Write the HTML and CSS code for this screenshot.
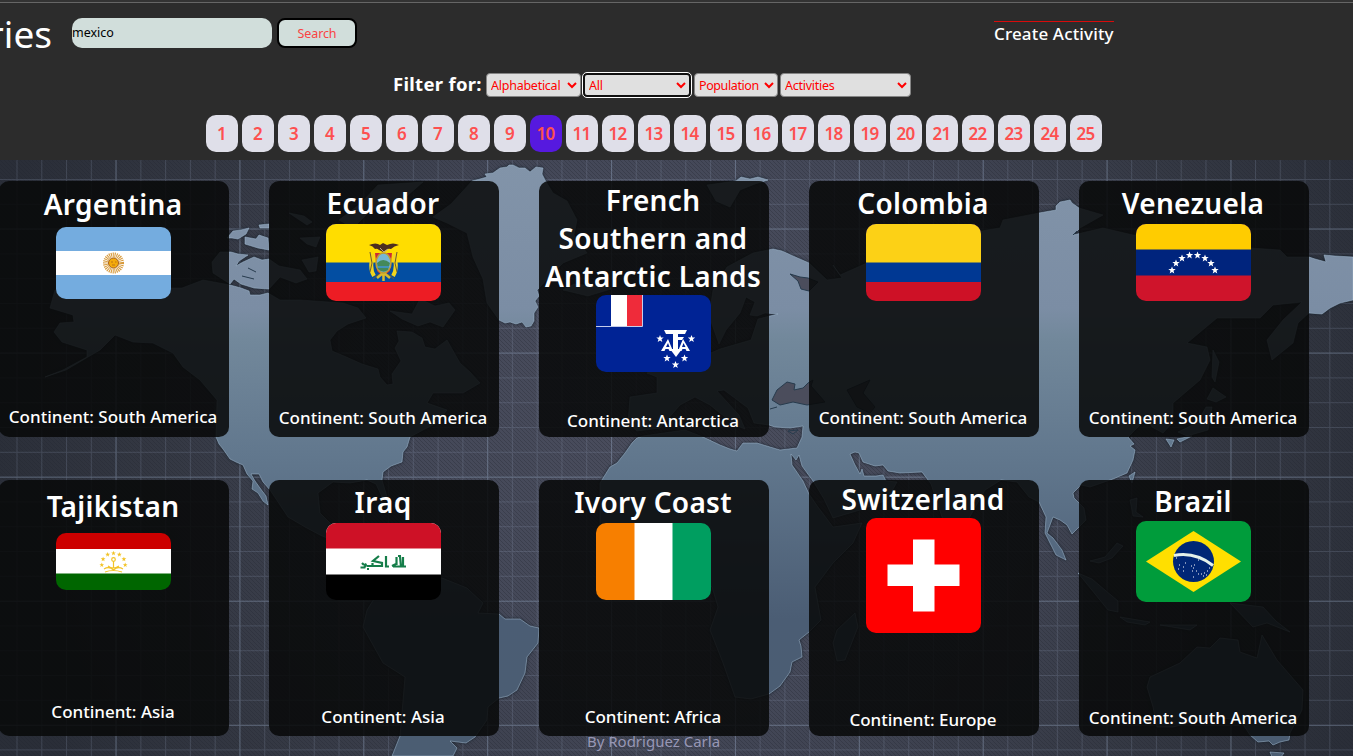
FILE: index.html
```
<!DOCTYPE html>
<html lang="en">
<head>
<meta charset="utf-8">
<title>Countries</title>
<link rel="stylesheet" href="styles.css">
</head>
<body>
<header class="header">
  <div class="topbar">
    <h1 class="brand"><span>Countries</span></h1>
    <input class="search-input" type="text" value="mexico">
    <button class="search-button">Search</button>
    <a class="create">Create Activity</a>
  </div>
  <div class="filters">
    <span class="filters-label">Filter for:</span>
    <select class="select select-alpha"><option>Alphabetical</option></select>
    <select class="select select-all"><option>All</option></select>
    <select class="select select-pop"><option>Population</option></select>
    <select class="select select-act"><option>Activities</option></select>
  </div>
  <nav class="pages">
    <a>1</a><a>2</a><a>3</a><a>4</a><a>5</a><a>6</a><a>7</a><a>8</a><a>9</a><a class="active">10</a><a>11</a><a>12</a><a>13</a><a>14</a><a>15</a><a>16</a><a>17</a><a>18</a><a>19</a><a>20</a><a>21</a><a>22</a><a>23</a><a>24</a><a>25</a>
  </nav>
</header>
<main class="main">
  <svg class="map" viewBox="0 160 1353 596" aria-hidden="true">
    <defs>
      <radialGradient id="sea" gradientUnits="userSpaceOnUse" cx="700" cy="420" r="720">
        <stop offset="0" stop-color="#4b4e5e"/><stop offset=".4" stop-color="#444858"/><stop offset=".75" stop-color="#343843"/><stop offset="1" stop-color="#2a2e38"/>
      </radialGradient>
      <linearGradient id="land" gradientUnits="userSpaceOnUse" x1="0" y1="160" x2="0" y2="756">
        <stop offset="0" stop-color="#8294a9"/><stop offset=".25" stop-color="#7b8da4"/><stop offset=".3" stop-color="#72889b"/><stop offset=".5" stop-color="#61778d"/><stop offset=".77" stop-color="#4b5d74"/><stop offset="1" stop-color="#4b5d72"/>
      </linearGradient>
      <pattern id="hatch" width="4" height="4" patternUnits="userSpaceOnUse"><path d="M-1-1l6 6M3-1l2 2M-1 3l2 2" stroke="#20242e" stroke-opacity=".3" stroke-width="1"/></pattern>
      <pattern id="minor" x="16.5" y="179" width="24.77" height="24.8" patternUnits="userSpaceOnUse"><path d="M.5 0V25M0 .5H25" stroke="#8d9cb8" stroke-opacity=".22"/></pattern>
      <pattern id="major" x="115.5" y="228.5" width="123.9" height="124.1" patternUnits="userSpaceOnUse"><path d="M.5 0V125M0 .5H125" stroke="#93a5c0" stroke-opacity=".3"/></pattern>
    </defs>
    <rect y="160" width="1353" height="596" fill="url(#sea)"/>
    <rect y="160" width="1353" height="596" fill="url(#hatch)"/>
    <rect y="160" width="1353" height="596" fill="url(#minor)"/>
    <rect y="160" width="1353" height="596" fill="url(#major)"/>
    <g class="land">
      <path d="M55 290L50 308 73 315 74 322 60 323 54 332 62 342 87 350 87 357 63 370 45 377 66 370 88 357 100 350 115 335 133 342 153 343 173 353 183 367 200 380 217 400 216 437 219 444 223 449 230 459 236 462 243 465 247 474 253 481 252 489 258 493 263 501 268 505 266 496 260 488 255 481 251 474 259 474 263 482 270 490 288 517 305 527 320 535 353 549 378 575 390 582 384 566 373 553 374 537 352 537 330 523 320 513 318 493 333 482 350 483 367 480 376 484 382 497 388 500 385 490 382 480 383 472 391 466 402 462 403 452 407 447 410 437 423 430 437 423 447 410 427 403 433 393 463 393 480 383 470 372 460 363 447 340 435 349 425 347 422 338 412 332 397 331 399 341 395 348 401 361 392 374 393 384 387 385 380 377 378 369 362 364 344 356 332 351 330 340 337 331 348 324 366 318 358 308 343 303 300 300 280 300 268 293 260 295 250 295 249 291 241 288 230 285 203 280 182 288 170 288Z"/>
      <path d="M227 238L233 231 241 230 249 228 246 234 238 239 232 238ZM245 237L256 239 259 235 268 238 269 250 258 248 245 244ZM231 252L238 254 248 255 239 261 236 266 243 262 254 257 262 260 269 259 279 266 300 270 307 279 296 283 280 277 269 289 254 288 241 284 234 279 230 284 213 273 212 262 220 252ZM259 225L269 224 269 228 260 228ZM289 213L304 216 312 222 307 225ZM300 238L320 237 316 247 307 244ZM302 260L318 257 316 271 309 272ZM378 185L423 182 399 203 371 210 353 228 339 220 360 204ZM390 311L412 314 420 299 435 306 449 303 455 310 443 327 430 322 418 326 402 319Z"/>
      <path d="M472 181L480 179 487 177 485 174 493 173 500 168 507 167 509 165 513 165 519 168 525 168 530 172 536 167 543 168 542 174 545 180 553 193 567 201 577 220 574 235 587 253 563 263 549 277 541 286 537 290 539 296 535 301 538 307 534 313 534 321 531 326 526 327 522 322 516 324 510 322 505 323 499 320 487 303 483 279 473 257 467 233 447 223 433 217 451 204Z"/>
      <path d="M563 290L574 284 594 286 607 282 611 289 588 296ZM707 185L736 181 741 177 750 179 758 177 768 180 755 184 740 190 730 207 716 201Z"/>
      <path d="M442 578L467 588 483 603 478 613 499 614 505 619 520 619 530 626 539 628 538 643 527 657 525 673 517 690 508 696 499 698 488 707 487 720 475 737 466 743 450 741 457 748 453 756 392 756 400 736 405 677 383 663 363 627 367 610 379 591 400 576Z"/>
      <path d="M630 397L628 423 637 431 660 428 680 405 695 397 710 405 735 425 745 429 739 415 717 391 724 390 748 408 754 423 769 425 775 427 790 428 803 426 802 437 797 448 780 450 770 447 757 443 743 443 737 451 730 449 720 445 703 437 685 430 643 436 637 438 632 443 625 453 617 463 610 467 600 483 600 525 625 561 690 571 712 587 718 607 710 630 723 663 735 697 751 699 769 694 780 686 790 672 792 662 802 657 801 646 799 640 809 632 821 620 815 587 833 563 853 543 862 523 833 527 818 507 809 494 803 481 792 465 791 454 796 460 799 455 802 466 813 481 824 499 833 518 860 510 887 500 897 482 886 481 883 475 876 476 864 476 862 469 860 474 855 465 850 454 855 452 859 453 863 462 875 466 883 465 888 471 900 473 922 472 931 484 943 520 955 550 968 520 985 490 1001 480 1017 482 1029 497 1039 502 1046 517 1045 533 1050 543 1056 555 1066 560 1062 550 1053 538 1047 533 1050 525 1053 517 1060 520 1067 525 1072 534 1086 520 1084 508 1074 498 1073 493 1081 485 1090 487 1113 479 1127 473 1133 460 1135 450 1130 446 1134 444 1128 437 1147 418 1152 427 1163 433 1173 422 1173 403 1200 380 1210 360 1207 347 1187 343 1217 318 1260 318 1273 305 1302 302 1283 320 1267 340 1272 360 1293 343 1298 323 1309 313 1322 314 1330 308 1340 303 1353 300 1353 257 1335 256 1324 255 1326 262 1315 259 1309 257 1287 257 1280 250 1250 248 1200 238 1133 235 1103 228 1073 235 1080 228 1103 215 1079 208 1072 203 1070 200 1060 202 1056 206 1056 210 1039 213 1003 220 1000 228 987 230 940 240 867 263 840 275 833 265 842 278 827 280 809 263 793 256 782 251 773 249 753 253 727 267 713 290 709 316 719 344 726 330 740 313 746 297 755 302 750 315 757 316 765 313 778 314 758 319 751 340 720 349 690 362 647 373 657 377 657 393Z"/>
      <path d="M855 613L858 627 845 660 837 661 833 643 837 630ZM1213 350L1219 362 1215 382 1212 377ZM1213 388L1226 397 1216 402 1207 399ZM1206 407L1212 407 1208 430 1187 436 1178 432 1197 423ZM1166 439L1174 440 1171 447ZM1177 439L1192 436 1180 442ZM1129 476L1135 472 1132 483ZM1130 500L1137 498 1136 512 1143 517 1133 516ZM1078 573L1092 579 1118 601 1118 612 1108 610ZM1090 561L1105 557 1117 543 1123 546 1112 558 1099 563ZM1120 617L1150 622 1145 625 1127 622ZM1160 625L1197 625 1190 630ZM1230 603L1263 607 1276 621 1290 632 1267 623 1253 627ZM1150 677L1180 663 1197 647 1210 648 1220 638 1238 640 1240 652 1257 658 1262 635 1277 660 1303 690 1302 710 1290 733 1289 740 1280 742 1273 745 1269 741 1258 742 1250 735 1240 720 1213 717 1173 727 1157 727 1153 707 1147 687ZM1270 752L1284 753 1281 757 1272 757Z"/>
    </g>
    <g class="water">
      <path d="M772 400L777 390 787 382 795 384 794 390 803 388 808 383 813 380 811 386 825 402 807 405 793 402 780 405ZM847 390L870 380 863 393 875 407 870 413 857 407ZM790 274L800 277 808 278 818 282 809 291 801 289 798 281ZM788 431L798 430 793 434Z"/>
      <path d="M770 409L777 407M1073 235L1077 231M242 276L254 279M248 268L256 272" fill="none"/>
    </g>
  </svg>
  <section class="cards">
    <article class="card card-ar"><h2>Argentina</h2>
      <svg class="flag" viewBox="0 0 115 72"><rect width="115" height="72" fill="#74acdf"/><rect y="24" width="115" height="24" fill="#fff"/><circle cx="57.5" cy="36" r="8" fill="none" stroke="#d79a3c" stroke-width="5" stroke-dasharray="1 .75"/><circle cx="57.5" cy="36" r="5" fill="#f4ab0b" stroke="#a75f18"/><path d="M55 35h2M59 35h1.500M56 38h3" stroke="#a75f18" stroke-width=".7"/></svg>
      <p>Continent: South America</p></article>
    <article class="card"><h2>Ecuador</h2>
      <svg class="flag" viewBox="0 0 115 77"><rect width="115" height="77" fill="#ed1c24"/><rect width="115" height="58" fill="#034ea2"/><rect width="115" height="38.500" fill="#fd0"/>
        <path d="M47 30q-4 14 1 22M68 30q4 14-1 22" fill="none" stroke="#f2d51d" stroke-width="4"/><path d="M44 28l2 11-2 9M71 28l-2 11 2 9M47 55l6-5M68 55l-6-5" fill="none" stroke="#6b5a35"/><path d="M49 29l2 18 6 6 7-6 2-18" fill="#cc2938"/><path d="M57 49l-6 5M58 49l6 5M57.500 49v8" stroke="#d9bc2b" stroke-width="2.500"/><ellipse cx="57.500" cy="39" rx="7.500" ry="10" fill="#78b7d5" stroke="#c29b2e" stroke-width="1.500"/><path d="M51 39q6-6 13 0l-2 7q-5 4-10-1z" fill="#44895a"/><path d="M52 43h11" stroke="#4292bb" stroke-width="2"/><path d="M43 21q7-3 11 0l3-2 4 2q6-3 12 0-5 1-8 4-3-1-5 1l-3 2-4-2q-2-2-4-1-2-3-6-4z" fill="#4d2e20"/><path d="M54 24l4 4 4-3" fill="none" stroke="#b9a78f"/></svg>
      <p>Continent: South America</p></article>
    <article class="card card-tf"><h2>French<br>Southern and<br>Antarctic Lands</h2>
      <svg class="flag" viewBox="0 0 115 77"><rect width="115" height="77" fill="#002395"/><path d="M0 31.500H46.500V0" fill="none" stroke="#c4cceb"/><rect x="15" width="16" height="31" fill="#fff"/><rect x="31" width="15" height="31" fill="#ef2b3a"/>
        <g fill="#fff"><path d="M68 35h23l-2 4h-7v3h6l-2 3h-4v9h4l-6 8-6-8h3V39h-7z"/><path d="M65 56l7-12 5 12h-3.500l-1-2h-3l-1 2zM94 56l-7-12-5 12h3.500l1-2h3l1 2z"/><path id="star" d="M64 40l1 2.600h2.700l-2.200 1.700.8 2.700-2.300-1.600-2.300 1.600.8-2.700-2.200-1.700h2.700z"/><use href="#star" x="31.500"/><use href="#star" x="7" y="19.500"/><use href="#star" x="24.500" y="19.500"/><use href="#star" x="15.500" y="26"/></g><path d="M70 52l2-4 1.500 4zM86 52l1.500-4 2 4z" fill="#002395"/></svg>
      <p>Continent: Antarctica</p></article>
    <article class="card"><h2>Colombia</h2>
      <svg class="flag" viewBox="0 0 115 77"><rect width="115" height="77" fill="#ce1126"/><rect width="115" height="58" fill="#003893"/><rect width="115" height="38.500" fill="#fcd116"/></svg>
      <p>Continent: South America</p></article>
    <article class="card"><h2>Venezuela</h2>
      <svg class="flag" viewBox="0 0 115 77"><rect width="115" height="77" fill="#cf142b"/><rect width="115" height="51.500" fill="#00247d"/><rect width="115" height="25.500" fill="#fc0"/><g fill="#fff" transform="translate(-64 -43.500)"><use href="#star" x="36" y="46"/><use href="#star" x="40" y="39"/><use href="#star" x="46" y="34"/><use href="#star" x="53.500" y="31"/><use href="#star" x="61.500" y="31"/><use href="#star" x="69" y="34"/><use href="#star" x="75" y="39"/><use href="#star" x="79" y="46"/></g></svg>
      <p>Continent: South America</p></article>
    <article class="card card-tj"><h2>Tajikistan</h2>
      <svg class="flag" viewBox="0 0 115 57"><path d="M0 10H115V45H0z" fill="#fff"/><rect width="115" height="16" fill="#c00"/><rect y="40.500" width="115" height="16.500" fill="#060"/><g fill="none" stroke="#f2c327" stroke-width="1.200"><circle cx="57.500" cy="26.500" r="1.800"/><path d="M57.500 28v7M52 33q5 4 11 0M48 36q5-3 9.500 1 4.500-4 9.500-1M49 39q8-3 17 0"/></g><g fill="#f2c327" transform="translate(-7.500 -3) scale(.65)"><use href="#star" x="18" y="10"/><use href="#star" x="20" y="1"/><use href="#star" x="27" y="-6"/><use href="#star" x="36" y="-8"/><use href="#star" x="45" y="-6"/><use href="#star" x="52" y="1"/><use href="#star" x="54" y="10"/></g></svg>
      <p>Continent: Asia</p></article>
    <article class="card"><h2>Iraq</h2>
      <svg class="flag" viewBox="0 0 115 77"><rect width="115" height="77" fill="#000"/><rect width="115" height="51.500" fill="#fff"/><rect width="115" height="25.500" fill="#ce1126"/><path d="M34.500 44.500h4l1.500-4M40.500 43h6v-3M46 43h10v-3l-9-2 6-5M60 33v10.500h3M66 43l4-2M67 43.500h8l-1-10M70.500 42v-8M77 34v9.500h3M72 33h3M41 46h2M36 40l2 2" fill="none" stroke="#157d49" stroke-width="2.200"/></svg>
      <p>Continent: Asia</p></article>
    <article class="card"><h2>Ivory Coast</h2>
      <svg class="flag" viewBox="0 0 115 77"><rect x="30" width="50" height="77" fill="#fff"/><rect width="38.500" height="77" fill="#f77f00"/><rect x="76.500" width="38.500" height="77" fill="#009e60"/></svg>
      <p>Continent: Africa</p></article>
    <article class="card card-ch"><h2>Switzerland</h2>
      <svg class="flag" viewBox="0 0 115 115"><rect width="115" height="115" fill="#f00"/><path d="M47 21.500h21.500v25H93.500V68H68.500v25.500H47V68H21.500V46.500H47z" fill="#fff"/></svg>
      <p>Continent: Europe</p></article>
    <article class="card card-br"><h2>Brazil</h2>
      <svg class="flag" viewBox="0 0 115 81"><rect width="115" height="81" fill="#009c3b"/><path d="M10 40.500L57.500 10 105 40.500 57.500 71z" fill="#ffdf00"/><circle cx="57.500" cy="40.500" r="20.500" fill="#002776"/><path d="M38 34.500q21-4 39 10" fill="none" stroke="#e4f1ea" stroke-width="3"/><path d="M40 37h1M43 44h1M42 48h1M47 46h1M49 42h1M47 50h1M55 45h1M57 47h1M58 44h1M56 50h1M60 50h1M62 53h1M65 53h1M68 52h1M71 50h1M73 47h1M67 55h1M57 56h1M62 39h1M70 54h1" stroke="#fff"/></svg>
      <p>Continent: South America</p></article>
  </section>
  <footer class="credit">By Rodriguez Carla</footer>
</main>
</body>
</html>
```
FILE: styles.css
```
* { box-sizing: border-box; }
body {
  margin: 0;
  width: 1353px;
  height: 756px;
  overflow: hidden;
  background: #2c2c2c;
  color: #fff;
  font-family: "Trebuchet MS", "Noto Sans", sans-serif;
}
.header {
  height: 160px;
  border-top: 2px solid #333;
  background: #2c2c2c;
}
.topbar {
  display: flex;
  height: 71px;
  padding-top: 15px;
  border-top: 1px solid #666;
}
.brand {
  display: flex;
  justify-content: flex-end;
  width: 52px;
  height: 34px;
  margin: 0 20px 0 0;
  font-size: 37px;
  font-weight: 400;
  line-height: 31px;
}
.search-input {
  width: 200px;
  height: 30px;
  margin-right: 5px;
  padding: 0;
  border: 0;
  border-radius: 10px;
  background: #d1dedb;
  color: #000;
  font: 12.5px/30px "Trebuchet MS", "Noto Sans", sans-serif;
}
.search-button {
  width: 80px;
  height: 30px;
  padding: 0;
  border: 2px solid #000;
  border-radius: 8px;
  background: #d1dedb;
  color: #fa4343;
  font: 12.5px "Trebuchet MS", "Noto Sans", sans-serif;
  letter-spacing: -.1px;
}
.create {
  width: 120px;
  height: 26px;
  margin: 3px 0 0 637px;
  border-top: 1px solid #d80b0b;
  font-size: 17px;
  font-weight: 500;
  letter-spacing: .15px;
  line-height: 23px;
  white-space: nowrap;
}
.filters {
  display: flex;
  align-items: center;
  height: 24px;
  padding-left: 393px;
}
.filters-label {
  width: 93px;
  font-size: 18.5px;
  font-weight: 700;
  letter-spacing: .3px;
  line-height: 22px;
  padding-bottom: 2px;
  white-space: nowrap;
}
.select {
  height: 24px;
  padding: 0;
  border: 1px solid #858585;
  border-radius: 4px;
  background: #e0e0e0;
  color: #f00;
  font: 12.5px "Trebuchet MS", "Noto Sans", sans-serif;
  letter-spacing: -.25px;
}
.select-alpha { width: 95px; }
.select-all {
  width: 108px;
  margin: 0 3px 0 2px;
  border: 2px solid #101010;
  outline: 1px solid #fff;
}
.select-pop { width: 84px; letter-spacing: -.4px; }
.select-act { width: 131px; margin-left: 2px; }
.pages {
  display: flex;
  gap: 4px;
  padding: 18px 0 0 206px;
}
.pages a {
  width: 32px;
  height: 37px;
  padding-right: 1px;
  border-radius: 10px;
  background: #dfdfe9;
  color: #fd5050;
  font-size: 17px;
  font-weight: 600;
  letter-spacing: -.7px;
  line-height: 38px;
  text-align: center;
}
.pages .active { background: #5619df; }
.main {
  position: relative;
  height: 596px;
}
.map {
  position: absolute;
  inset: 0;
  width: 1353px;
  height: 596px;
}
.land {
  fill: url(#land);
  stroke: #a0b8cd;
  stroke-opacity: .55;
  stroke-width: 1;
  filter: drop-shadow(0 0 1.5px #14202d);
}
.water { fill: #4b4d5c; stroke: #273b4d; }
.cards {
  position: relative;
  display: grid;
  grid-template-columns: repeat(5, 230px);
  grid-auto-rows: 256px;
  gap: 43px 40px;
  margin-left: -1px;
  padding-top: 21px;
}
.card {
  --top: 3px;
  --gap: 2px;
  --bottom: 8px;
  display: flex;
  flex-direction: column;
  align-items: center;
  padding: var(--top) 2px var(--bottom) 0;
  border-radius: 10px;
  background: rgba(8, 9, 9, .87);
}
.card-ar { --top: 4px; --gap: 4px; --bottom: 9px; }
.card-tf { --top: 0px; --gap: 0px; --bottom: 5px; }
.card-tj { --top: 7px; --gap: 8px; --bottom: 13px; }
.card-ch { --top: 0px; --gap: 0px; --bottom: 5px; }
.card-br { --top: 2px; --gap: 1px; --bottom: 7px; }
.card h2 {
  margin: 0 0 var(--gap);
  font-size: 28px;
  font-weight: 600;
  letter-spacing: .3px;
  line-height: 38px;
  text-align: center;
  white-space: nowrap;
}
.flag {
  display: block;
  flex: none;
  width: 115px;
  border-radius: 10px;
}
.card p {
  margin: auto 0 0;
  font-size: 17px;
  font-weight: 500;
  line-height: 22px;
  white-space: nowrap;
}
.credit {
  position: relative;
  margin-top: -5px;
  color: #9797b5;
  font-size: 15px;
  line-height: 20px;
  text-align: center;
  padding-right: 46px;
}
```
